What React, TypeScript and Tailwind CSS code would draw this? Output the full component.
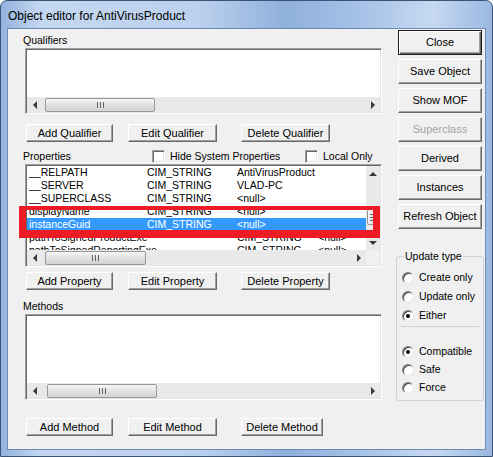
import React from "react";

const font = "font-['Liberation_Sans',Arial,sans-serif]";

function Btn({
  label,
  w,
  h = 18,
  def,
  disabled,
  className = "",
}: {
  label: string;
  w: number;
  h?: number;
  def?: boolean;
  disabled?: boolean;
  className?: string;
}) {
  return (
    <div
      style={{ width: w, height: h }}
      className={`flex items-center justify-center shrink-0 bg-[#f0f0f0] text-[11px] leading-none ${
        disabled ? "text-[#a3a3a3]" : "text-black"
      } ${
        def
          ? "border border-[#1c1c1c] shadow-[inset_1px_1px_0_#ffffff,inset_-1px_-1px_0_#696969,inset_-2px_-2px_0_#a0a0a0]"
          : "border border-t-white border-l-white border-b-[#696969] border-r-[#696969] shadow-[inset_-1px_-1px_0_#a0a0a0]"
      } ${className}`}
    >
      {label}
    </div>
  );
}

function Arrow({ dir }: { dir: "l" | "r" | "u" | "d" }) {
  const pts = {
    l: "5,0 5,8 1,4",
    r: "1,0 1,8 5,4",
    u: "0,5 8,5 4,1",
    d: "0,1 8,1 4,5",
  }[dir];
  const vb = dir === "l" || dir === "r" ? "0 0 6 8" : "0 0 8 6";
  const sz = dir === "l" || dir === "r" ? "w-[6px] h-[8px]" : "w-[8px] h-[6px]";
  return (
    <svg viewBox={vb} className={sz}>
      <polygon points={pts} fill="#3a3a3a" />
    </svg>
  );
}

function HThumb({ w, ml }: { w: number; ml: number }) {
  return (
    <div
      style={{ width: w, marginLeft: ml }}
      className="h-[14px] rounded-[2px] border border-[#979797] bg-[linear-gradient(180deg,#f6f6f6,#e2e2e2_50%,#d3d3d3)] flex items-center justify-center gap-[2px]"
    >
      <span className="w-px h-[6px] bg-[#606060]" />
      <span className="w-px h-[6px] bg-[#606060]" />
      <span className="w-px h-[6px] bg-[#606060]" />
    </div>
  );
}

function HScroll({ thumbW, thumbMl }: { thumbW: number; thumbMl: number }) {
  return (
    <div className="h-[15px] flex items-center bg-[#e9e9e9] flex-1 min-w-0">
      <div className="w-[15px] h-full flex items-center justify-center shrink-0">
        <Arrow dir="l" />
      </div>
      <div className="flex-1 flex items-center">
        <HThumb w={thumbW} ml={thumbMl} />
      </div>
      <div className="w-[15px] h-full flex items-center justify-center shrink-0">
        <Arrow dir="r" />
      </div>
    </div>
  );
}

function Sunken({
  w,
  h,
  children,
  className = "",
}: {
  w: number;
  h: number;
  children: React.ReactNode;
  className?: string;
}) {
  return (
    <div
      style={{ width: w, height: h }}
      className={`shrink-0 p-px border border-t-[#a0a0a0] border-l-[#a0a0a0] border-b-white border-r-white shadow-[inset_1px_1px_0_#696969,inset_-1px_-1px_0_#e3e3e3] ${className}`}
    >
      <div className="w-full h-full bg-white flex flex-col overflow-hidden">{children}</div>
    </div>
  );
}

function Check({ label, className = "" }: { label: string; className?: string }) {
  return (
    <div className={`flex items-center gap-[5px] ${className}`}>
      <span className="w-[13px] h-[13px] shrink-0 bg-white border border-t-[#a0a0a0] border-l-[#a0a0a0] border-b-white border-r-white shadow-[inset_1px_1px_0_#696969,inset_-1px_-1px_0_#e3e3e3]" />
      <span>{label}</span>
    </div>
  );
}

function Radio({ label, on, h }: { label: string; on?: boolean; h: number }) {
  return (
    <div style={{ height: h }} className="flex items-center gap-[5px] pl-[5px]">
      <span className="relative w-[12px] h-[12px] rounded-full bg-white border border-t-[#808080] border-l-[#808080] border-b-[#e6e6e6] border-r-[#e6e6e6] shadow-[inset_1px_1px_0_#404040] flex items-center justify-center">
        {on && <span className="w-[4px] h-[4px] rounded-full bg-black" />}
      </span>
      <span>{label}</span>
    </div>
  );
}

const rows: { n: string; t: string; v: string; wide?: boolean }[] = [
  { n: "__RELPATH", t: "CIM_STRING", v: "AntiVirusProduct" },
  { n: "__SERVER", t: "CIM_STRING", v: "VLAD-PC" },
  { n: "__SUPERCLASS", t: "CIM_STRING", v: "<null>" },
  { n: "displayName", t: "CIM_STRING", v: "<null>" },
  { n: "instanceGuid", t: "CIM_STRING", v: "<null>" },
  { n: "pathToSignedProductExe", t: "CIM_STRING", v: "<null>", wide: true },
  { n: "pathToSignedReportingExe", t: "CIM_STRING", v: "<null>", wide: true },
];

export default function App() {
  return (
    <div className={`relative w-[493px] h-[457px] overflow-hidden bg-white ${font} text-[10.5px] text-black`}>
      <div className="w-full h-full flex flex-col rounded-t-[7px] border border-[#3a5478] bg-[linear-gradient(90deg,#93b2dc_0%,#c3d7f0_8%,#bcd1ee_40%,#8fb0dc_58%,#a4c0e6_72%,#c6d9f1_88%,#9ab8e0_100%)]">
        <div className="h-[27px] flex items-center pl-[7px] pt-[3px] text-[12px] text-black">
          Object editor for AntiVirusProduct
        </div>
        <div className="flex-1 mx-[6px] mb-[6px] border border-[#6d8bb5] bg-[#f0f0f0] flex">
          {/* left column */}
          <div className="w-[377px] flex flex-col shrink-0">
            <div className="ml-[15px] mt-[4px] h-[14px] leading-[14px]">Qualifiers</div>
            <Sunken w={357} h={66} className="ml-[17px] mt-px">
              <div className="flex-1" />
              <div className="flex">
                <HScroll thumbW={110} thumbMl={3} />
              </div>
            </Sunken>
            <div className="flex mt-[10px] ml-[18px]">
              <Btn label="Add Qualifier" w={87} />
              <Btn label="Edit Qualifier" w={89} className="ml-[15px]" />
              <Btn label="Delete Qualifier" w={89} className="ml-[24px]" />
            </div>

            <div className="mt-[7px] h-[15px] flex items-center">
              <span className="ml-[15px] w-[129px]">Properties</span>
              <Check label="Hide System Properties" className="w-[153px]" />
              <Check label="Local Only" />
            </div>
            <Sunken w={357} h={103} className="ml-[17px]">
              <div className="flex h-[84px]">
                <div className="flex-1 flex flex-col min-w-0">
                  {rows.map((r, i) => (
                    <div
                      key={r.n}
                      className={`h-[13px] leading-[13px] flex whitespace-nowrap pl-[2px] shrink-0 ${
                        i === 4 ? "bg-[#3399ff] text-white" : ""
                      }`}
                    >
                      <span className={r.wide ? "w-[208px]" : "w-[118px]"}>{r.n}</span>
                      <span className={r.wide ? "w-[81px]" : "w-[90px]"}>{r.t}</span>
                      <span>{r.v}</span>
                    </div>
                  ))}
                </div>
                <div className="w-[14px] flex flex-col bg-[#e9e9e9] shrink-0">
                  <div className="h-[15px] flex items-center justify-center">
                    <Arrow dir="u" />
                  </div>
                  <div className="flex-1">
                    <div className="mt-[28px] h-[16px] mx-px rounded-[2px] border border-[#979797] bg-[linear-gradient(90deg,#f6f6f6,#e2e2e2_50%,#d3d3d3)] flex flex-col items-center justify-center gap-[2px]">
                      <span className="w-[6px] h-px bg-[#606060]" />
                      <span className="w-[6px] h-px bg-[#606060]" />
                      <span className="w-[6px] h-px bg-[#606060]" />
                    </div>
                  </div>
                  <div className="h-[15px] flex items-center justify-center">
                    <Arrow dir="d" />
                  </div>
                </div>
              </div>
              <div className="flex">
                <HScroll thumbW={101} thumbMl={3} />
                <div className="w-[14px] h-[15px] bg-[#f0f0f0]" />
              </div>
            </Sunken>
            <div className="flex mt-[5px] ml-[18px]">
              <Btn label="Add Property" w={87} />
              <Btn label="Edit Property" w={89} className="ml-[15px]" />
              <Btn label="Delete Property" w={89} className="ml-[24px]" />
            </div>

            <div className="ml-[15px] mt-[9px] h-[14px] leading-[14px]">Methods</div>
            <Sunken w={357} h={86} className="ml-[17px] mt-px">
              <div className="flex-1" />
              <div className="flex">
                <HScroll thumbW={110} thumbMl={5} />
              </div>
            </Sunken>
            <div className="flex mt-[18px] ml-[18px]">
              <Btn label="Add Method" w={87} />
              <Btn label="Edit Method" w={89} className="ml-[15px]" />
              <Btn label="Delete Method" w={82} className="ml-[24px]" />
            </div>
          </div>

          {/* right column */}
          <div className="ml-[13px] w-[84px] flex flex-col">
            <div className="mt-px flex flex-col gap-[4px]">
              <Btn label="Close" w={84} h={25} def />
              <Btn label="Save Object" w={84} h={25} />
              <Btn label="Show MOF" w={84} h={25} />
              <Btn label="Superclass" w={84} h={25} disabled />
              <Btn label="Derived" w={84} h={25} />
              <Btn label="Instances" w={84} h={25} />
              <Btn label="Refresh Object" w={84} h={25} />
            </div>
            <fieldset className="mt-[20px] -ml-[2px] w-[88px] border border-[#c9d2da] rounded-[3px] px-0 pb-[3px]">
              <legend className="ml-[7px] px-px h-[14px] leading-[14px]">Update type</legend>
              <div className="mt-[5px]">
                <Radio label="Create only" h={19} />
                <Radio label="Update only" h={19} />
                <Radio label="Either" h={19} on />
              </div>
              <div className="mt-px mx-[4px] h-px bg-[#c9d2da]" />
              <div className="mt-[16px]">
                <Radio label="Compatible" h={18} on />
                <Radio label="Safe" h={18} />
                <Radio label="Force" h={18} />
              </div>
            </fieldset>
          </div>
        </div>
      </div>

      {/* red highlight rectangle drawn over the list */}
      <div className="absolute left-[19px] top-[206px] w-[361px] h-[32px] border-[#ed1c24] border-l-[7px] border-r-[7px] border-t-[4px] border-b-[8px] pointer-events-none" />
    </div>
  );
}
